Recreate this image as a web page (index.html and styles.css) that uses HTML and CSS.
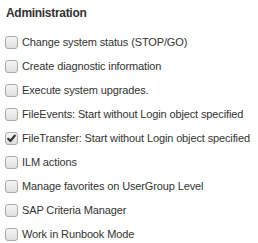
FILE: index.html
```html
<!DOCTYPE html>
<html>
<head>
<meta charset="utf-8">
<link rel="stylesheet" href="styles.css">
</head>
<body>
<div class="panel">
  <div class="title">Administration</div>
  <ul class="list">
    <li class="row"><span class="box"></span><span class="label">Change system status (STOP/GO)</span></li>
    <li class="row"><span class="box"></span><span class="label">Create diagnostic information</span></li>
    <li class="row"><span class="box"></span><span class="label">Execute system upgrades.</span></li>
    <li class="row"><span class="box"></span><span class="label">FileEvents: Start without Login object specified</span></li>
    <li class="row"><span class="box checked"><svg viewBox="0 0 13 13" width="13" height="13"><path d="M3.2 6.8 L5.4 9 L9.8 3.6" fill="none" stroke="#333" stroke-width="2.2" stroke-linecap="round" stroke-linejoin="round"/></svg></span><span class="label">FileTransfer: Start without Login object specified</span></li>
    <li class="row"><span class="box"></span><span class="label">ILM actions</span></li>
    <li class="row"><span class="box"></span><span class="label">Manage favorites on UserGroup Level</span></li>
    <li class="row"><span class="box"></span><span class="label">SAP Criteria Manager</span></li>
    <li class="row"><span class="box"></span><span class="label">Work in Runbook Mode</span></li>
  </ul>
</div>
</body>
</html>
```

FILE: styles.css
```css
html, body {
  margin: 0;
  padding: 0;
  background: #fff;
}
body {
  font-family: "Liberation Sans", Arial, sans-serif;
  color: #333;
}
.panel {
  padding: 5px 0 0 5px;
}
.title {
  font-size: 12px;
  font-weight: bold;
  line-height: 16px;
  letter-spacing: -0.3px;
  color: #333;
  margin: 0 0 15px 1px;
}
.list {
  list-style: none;
  margin: 0;
  padding: 0;
  display: flex;
  flex-direction: column;
  gap: 11px;
}
.row {
  display: flex;
  align-items: center;
  height: 13px;
  white-space: nowrap;
}
.box {
  width: 11px;
  height: 11px;
  border: 1px solid #aaa;
  border-radius: 3px;
  background: linear-gradient(#f6f6f6, #dedede);
  flex: none;
  margin-right: 4px;
  position: relative;
}
.box svg {
  position: absolute;
  left: -1px;
  top: -1px;
}
.label {
  font-size: 11px;
  line-height: 13px;
  letter-spacing: -0.13px;
  color: #333;
}
```
